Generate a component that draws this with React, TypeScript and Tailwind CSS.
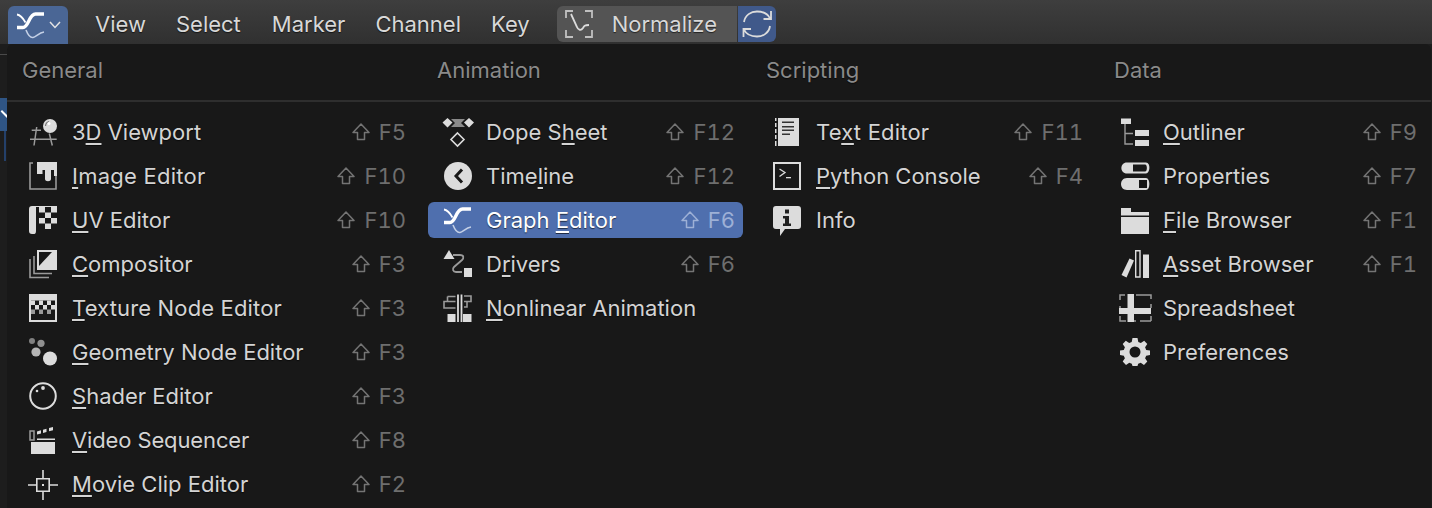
import type { ReactNode } from "react";

const G = "#dcdcdc";
const D = "#9a9a9a";
const BG = "#181818";

function Svg({ children, className = "w-[28px] h-[28px]" }: { children: ReactNode; className?: string }) {
  return (
    <svg viewBox="0 0 28 28" className={`${className} shrink-0 overflow-visible`} fill="none">
      {children}
    </svg>
  );
}

function GraphGlyph({ sub = "#dcdcdc" }: { sub?: string }) {
  return (
    <>
      <path d="M1 3.500C5 4 7 7 9.500 11.500" stroke="#fff" strokeWidth="1.800" />
      <path d="M1 16.500H7C12.500 16.500 13 3 19.500 3H28" stroke="#fff" strokeWidth="3.400" />
      <path d="M10 19C12 24 14 27 17 26.500C20 26 23 21.500 28 21" stroke={sub} strokeWidth="1.600" />
    </>
  );
}

const icons: Record<string, ReactNode> = {
  viewport: (
    <Svg>
      <path d="M7.700 9L5 27.500M20.300 15.500L23.300 27.500M2.700 12.300H12M1 21.300H27.700" stroke={D} strokeWidth="1.500" />
      <circle cx="21" cy="8" r="7" fill={G} />
      <path d="M16.500 8A5 5 0 0 1 20 3.500" stroke="#777" strokeWidth="1.200" />
      <circle cx="20" cy="5.500" r="1.500" fill="#fff" />
    </Svg>
  ),
  image: (
    <Svg>
      <path d="M4 1H1V27H27V14" stroke={D} strokeWidth="1.600" />
      <path d="M8 0H28V14H25V8H22V17C22 20 16 20 16 17V8H13.500V12H8Z" fill={G} />
    </Svg>
  ),
  uv: (
    <Svg>
      <path d="M3 0H28V1H7V25C7 27.500 6 28 4.500 28H3C1 28 0 27 0 25V3C0 1 1 0 3 0Z" fill={G} />
      <path d="M10 1H28V23H10Z" fill={G} />
      <path d="M16 1H22V6.500H16ZM10 6.500H16V12H10ZM22 6.500H28V12H22ZM16 12H22V17.500H16ZM10 17.500H16V23H10ZM22 17.500H28V23H22Z" fill={BG} />
    </Svg>
  ),
  compositor: (
    <Svg>
      <path d="M8 0H28V20H8Z" fill={G} />
      <path d="M10 2H23L10 16Z" fill={BG} />
      <path d="M5 6V23.500H23M1 9V27.500H20" stroke={D} strokeWidth="1.600" />
    </Svg>
  ),
  texture: (
    <Svg>
      <path d="M0 0H28V28H0Z" fill={G} />
      <path d="M2 6.500H26V26H2Z" fill={BG} />
      <path d="M2 6.500H6V11H2ZM10 6.500H14V11H10ZM18 6.500H22V11H18ZM6 11H10V15.500H6ZM14 11H18V15.500H14ZM22 11H26V15.500H22Z" fill={G} />
      <path d="M2 15.500H6V20H2ZM10 15.500H14V20H10ZM18 15.500H22V20H18Z" fill={D} />
    </Svg>
  ),
  geometry: (
    <Svg>
      <circle cx="3" cy="3" r="3" fill="#808080" />
      <circle cx="12" cy="5.300" r="3.600" fill="#8f8f8f" />
      <circle cx="7" cy="14" r="4.600" fill="#b5b5b5" />
      <circle cx="21" cy="20.500" r="7" fill={G} />
    </Svg>
  ),
  shader: (
    <Svg>
      <circle cx="14" cy="14" r="12.800" stroke={G} strokeWidth="2" />
      <circle cx="14" cy="6" r="1.900" fill={G} />
      <circle cx="8" cy="9" r="1.300" fill={G} />
    </Svg>
  ),
  video: (
    <Svg>
      <path d="M2 16H26V28H2Z" fill={G} />
      <path d="M8 12.500H26V14H8Z" fill={G} />
      <path d="M1 5H5V14H1Z" stroke={D} strokeWidth="1.500" />
      <path d="M8 5.500L12 4.300V7.500L8 8.500ZM14 3.700L17.500 2.700V6L14 7ZM20 2L24 1V4.300L20 5.300Z" fill={G} />
    </Svg>
  ),
  clip: (
    <Svg>
      <path d="M14 0V8M14 21V30M-1 15H7M20 15H29" stroke={G} strokeWidth="1.600" />
      <path d="M7.800 8.800H20.200V21.200H7.800Z" stroke={G} strokeWidth="1.600" />
      <path d="M13 14H15V16H13Z" fill={G} />
    </Svg>
  ),
  dope: (
    <Svg>
      <path d="M8 1H22L18 5L22 9H8L12 5Z" fill="#8a8a8a" />
      <path d="M4.500 0L9.500 4.500L4.500 9.500L-0.500 4.500ZM26 0L31 4.500L26 9.500L21 4.500Z" fill={G} />
      <path d="M14.500 15L21 21.500L14.500 28L8 21.500Z" stroke={G} strokeWidth="1.600" />
    </Svg>
  ),
  timeline: (
    <Svg>
      <circle cx="15" cy="14" r="14" fill={G} />
      <path d="M19 7.500L13 14L19 20.500" stroke={BG} strokeWidth="3" />
    </Svg>
  ),
  graph: (
    <Svg>
      <GraphGlyph sub="#c4d0e6" />
    </Svg>
  ),
  drivers: (
    <Svg>
      <path d="M6 0L11.500 9H0.500Z" fill={G} />
      <path d="M21 18H29V27H21Z" fill={G} />
      <path d="M10 5H17C21 5 21 8 19 10L11 17C9 19 10 22 13 22H19" stroke={D} strokeWidth="1.800" />
    </Svg>
  ),
  nla: (
    <Svg>
      <path d="M15 0.500V28M18.500 0.500V28" stroke={G} strokeWidth="1.800" />
      <path d="M4.500 2.500H12.500M4.500 2.500V7.500H1V14H12.500M4.500 7.500H12.500M21 2H28V7.500H21M24 7.500V13H21" stroke={D} strokeWidth="1.600" />
      <path d="M4.500 20H12.500V28H4.500ZM20 20H28.500V28H20Z" fill={G} />
    </Svg>
  ),
  text: (
    <Svg>
      <path d="M2 0H3.500V3H2ZM2 5H3.500V9H2ZM2 11H3.500V15H2ZM2 17H3.500V21H2ZM2 23H3.500V28H2Z" fill={G} />
      <path d="M5 0H26V28H5Z" fill={G} />
      <path d="M9 3.500H21V5H9ZM9 8H21V9.500H9ZM9 11.500H21V13H9ZM9 15.500H17V17H9Z" fill="#333" />
    </Svg>
  ),
  python: (
    <Svg>
      <path d="M1 1H27V27H1Z" stroke={G} strokeWidth="2" />
      <path d="M6.500 7L12 10.500L6.500 14.500" stroke={G} strokeWidth="1.300" />
      <path d="M13 15H18V16.300H13Z" fill={G} />
    </Svg>
  ),
  info: (
    <Svg>
      <path d="M3 0H25C27 0 28 1 28 3V20C28 22 27 23 25 23H12L7 30V23H3C1 23 0 22 0 20V3C0 1 1 0 3 0Z" fill={G} />
      <path d="M12 3.500H16V7.500H12ZM10 10H16V17.500H18V20H10V17.500H12V12.500H10Z" fill="#202020" />
    </Svg>
  ),
  outliner: (
    <Svg>
      <path d="M1 0.500H11V6H1Z" fill={G} />
      <path d="M5 6V26H13M5 15.500H13" stroke={D} strokeWidth="1.400" />
      <path d="M15 12H29V18H15ZM15 22H29V28H15Z" fill={G} />
    </Svg>
  ),
  properties: (
    <Svg>
      <path d="M7 0.500H26C31 0.500 30 11.500 26 11.500H7C-0.500 11.500 -0.500 0.500 7 0.500Z" fill={G} />
      <path d="M13 2.500H25C27.500 2.500 27.500 9.500 25 9.500H13Z" fill={BG} />
      <path d="M7 16H26C30.500 16 30.500 28 26 28H7C-1 28 -1 16 7 16Z" fill={G} />
      <path d="M19 18H27V26H19Z" fill={BG} />
    </Svg>
  ),
  files: (
    <Svg>
      <path d="M1 2H11V6H29V9.500H1Z" fill={G} />
      <path d="M1 11H29V28H1Z" fill={G} />
    </Svg>
  ),
  asset: (
    <Svg>
      <path d="M1.500 25L9.500 8.500L14 10.500L6.500 27.500Z" fill={G} />
      <path d="M15.700 0.700H20V27H15.700Z" stroke={G} strokeWidth="1.400" />
      <path d="M23 4.500H29V28H23Z" fill={G} />
    </Svg>
  ),
  sheet: (
    <Svg>
      <path d="M5 1H0V6M0 12V15M0 22V27H6M16 1H24M24 1H31V5M31 14V10M31 27H25V27M31 22V27M10 27H16M20 27H25" stroke={D} strokeWidth="1.500" />
      <path d="M7.500 0H14V14H31V20H14V28H7.500V20H-1V14H7.500Z" fill={G} />
    </Svg>
  ),
  prefs: (
    <Svg>
      <path
        fillRule="evenodd"
        d="M12.500 0H17.500L18.300 3.900L20.800 4.900L24.200 2.700L27.300 6L25.100 9.300L26.200 11.900L30 12.600V15.400L30 17L26.200 17.700L25.100 20.300L27.300 23.600L24 27L20.700 24.700L18.200 25.700L17.500 28H12.500L11.800 25.700L9.300 24.700L6 27L2.700 23.600L4.900 20.300L3.800 17.700L0 17V12.600L3.800 11.900L4.900 9.300L2.700 6L5.800 2.700L9.200 4.900L11.700 3.900ZM15 8.500A5.500 5.500 0 1 0 15 19.500A5.500 5.500 0 1 0 15 8.500Z"
        fill={G}
      />
    </Svg>
  ),
};

type Item = { icon: string; label: string; hot?: string; key_?: string; active?: boolean; track?: string };

const columns: { title: string; width: string; titlePad: string; rowPad: string; items: Item[] }[] = [
  {
    title: "General",
    width: "w-[401px]",
    titlePad: "pl-[8px]",
    rowPad: "pr-[9px]",
    items: [
      { icon: "viewport", label: "3D Viewport", hot: "D", key_: "F5" },
      { icon: "image", label: "Image Editor", hot: "I", key_: "F10", track: "tracking-[0.25px]" },
      { icon: "uv", label: "UV Editor", hot: "U", key_: "F10" },
      { icon: "compositor", label: "Compositor", hot: "C", key_: "F3" },
      { icon: "texture", label: "Texture Node Editor", hot: "T", key_: "F3", track: "tracking-[0.15px]" },
      { icon: "geometry", label: "Geometry Node Editor", hot: "G", key_: "F3" },
      { icon: "shader", label: "Shader Editor", hot: "S", key_: "F3" },
      { icon: "video", label: "Video Sequencer", hot: "V", key_: "F8", track: "tracking-[-0.13px]" },
      { icon: "clip", label: "Movie Clip Editor", hot: "M", key_: "F2" },
    ],
  },
  {
    title: "Animation",
    width: "w-[317px] pr-[2px]",
    titlePad: "pl-[9px]",
    rowPad: "pr-[8px]",
    items: [
      { icon: "dope", label: "Dope Sheet", hot: "h", key_: "F12" },
      { icon: "timeline", label: "Timeline", hot: "l", key_: "F12" },
      { icon: "graph", label: "Graph Editor", hot: "E", key_: "F6", active: true },
      { icon: "drivers", label: "Drivers", hot: "r", key_: "F6" },
      { icon: "nla", label: "Nonlinear Animation", hot: "N" },
    ],
  },
  {
    title: "Scripting",
    width: "w-[334px]",
    titlePad: "pl-[8px]",
    rowPad: "pr-[9px]",
    items: [
      { icon: "text", label: "Text Editor", hot: "x", key_: "F11", track: "tracking-[0.2px]" },
      { icon: "python", label: "Python Console", hot: "P", key_: "F4" },
      { icon: "info", label: "Info" },
    ],
  },
  {
    title: "Data",
    width: "w-[321px]",
    titlePad: "pl-[9px]",
    rowPad: "pr-[9px]",
    items: [
      { icon: "outliner", label: "Outliner", hot: "O", key_: "F9" },
      { icon: "properties", label: "Properties", key_: "F7" },
      { icon: "files", label: "File Browser", hot: "F", key_: "F1" },
      { icon: "asset", label: "Asset Browser", hot: "A", key_: "F1" },
      { icon: "sheet", label: "Spreadsheet" },
      { icon: "prefs", label: "Preferences" },
    ],
  },
];

function Label({ text, hot }: { text: string; hot?: string }) {
  if (!hot) return <span>{text}</span>;
  const i = text.indexOf(hot);
  return (
    <span>
      {text.slice(0, i)}
      <span className="underline decoration-[2px] underline-offset-[3px] [text-decoration-skip-ink:none]">{hot}</span>
      {text.slice(i + 1)}
    </span>
  );
}

function ShiftArrow({ color }: { color: string }) {
  return (
    <svg viewBox="0 0 18 18" className="w-[18px] h-[18px]" fill="none">
      <path d="M9 1L17 9.500H12.500V16.500H5.500V9.500H1Z" stroke={color} strokeWidth="1.500" strokeLinejoin="round" />
    </svg>
  );
}

function Row({ item, pad }: { item: Item; pad: string }) {
  return (
    <div
      className={`h-[36px] w-full pl-[15px] ${pad} flex items-center rounded-[6px] ${
        item.active ? "bg-[#4f6fae] text-white" : "text-[#d4d4d4]"
      }`}
    >
      {icons[item.icon]}
      <span className={`ml-[15px] flex-1 [text-shadow:0_1px_1px_rgba(0,0,0,0.6)] ${item.track ?? ""}`}>
        <Label text={item.label} hot={item.hot} />
      </span>
      {item.key_ && (
        <span className={`flex items-center gap-[9px] tabular-nums ${item.active ? "text-[#9db0d6]" : "text-[#6e6e6e]"}`}>
          <ShiftArrow color={item.active ? "#9db0d6" : "#747474"} />
          {item.key_}
        </span>
      )}
    </div>
  );
}

export default function App() {
  return (
    <div className="w-[1432px] h-[508px] overflow-hidden bg-[#1d1d1d] flex flex-col font-['Inter',sans-serif] text-[22px] leading-none">
      {/* Top bar */}
      <div className="h-[44px] shrink-0 bg-gradient-to-b from-[#3e3e3e] to-[#303030] flex items-end pl-[8px] text-[#d8d8d8] [text-shadow:0_1px_1px_rgba(0,0,0,0.6)]">
        <div className="w-[60px] h-[38px] bg-[#4a6695] rounded-t-[6px] flex items-center pl-[8px]">
          <Svg>
            <GraphGlyph sub="#c4d0e6" />
          </Svg>
          <svg viewBox="0 0 12 8" className="w-[12px] h-[8px] ml-[5px]" fill="none">
            <path d="M1 1L6 6.500L11 1" stroke="#e4e4e4" strokeWidth="1.500" />
          </svg>
        </div>
        <div className="flex items-center h-[38px] pb-[2px] ml-[27px]">
          <span>View</span>
          <span className="ml-[30px]">Select</span>
          <span className="ml-[31px]">Marker</span>
          <span className="ml-[30px]">Channel</span>
          <span className="ml-[30px]">Key</span>
        </div>
        <div className="flex items-stretch h-[36px] mb-[2px] ml-[27px]">
          <div className="w-[180px] bg-[#545454] rounded-l-[6px] flex items-center pl-[8px] gap-[19px]">
            <Svg>
              <path d="M8 1H1V8M20 1H27V8M1 20V27H8M27 20V27H20" stroke="#c0c0c0" strokeWidth="1.800" />
              <path d="M6 4L12 17C13 20 16 21 18 18C19 16 19.500 15 24 15" stroke={G} strokeWidth="1.800" />
            </Svg>
            <span>Normalize</span>
          </div>
          <div className="w-[38px] ml-[1px] bg-[#40598a] rounded-r-[6px] flex items-center justify-center">
            <Svg>
              <path d="M1 12C2 5 8 1.500 14 1.500C20 1.500 25 4 27 8.500M28 1V9H20.500" stroke={G} strokeWidth="1.800" />
              <path d="M27 16C26 23 20 26.500 14 26.500C8 26.500 3 24 1 19.500M0.500 27V19H8" stroke={G} strokeWidth="1.800" />
            </Svg>
          </div>
        </div>
      </div>

      <div className="flex flex-1 min-h-0">
        {/* Editor peeking out behind the menu */}
        <div className="w-[7px] shrink-0 flex flex-col">
          <div className="h-[10px] shrink-0" />
          <div className="h-px bg-[#4a4a4a] shrink-0" />
          <div className="h-[43px] shrink-0" />
          <div className="h-[33px] bg-[#2f5585] shrink-0 relative overflow-hidden">
            <div className="absolute left-0 top-[15px] w-[9px] h-[2px] bg-white rotate-45" />
          </div>
          <div className="h-[30px] w-[2px] ml-[4px] bg-[#24406a] shrink-0" />
        </div>

        {/* Area menu */}
        <div className="w-[1424px] bg-[#181818] rounded-t-[6px]">
          <div className="flex h-[58px] pb-[5px] border-b-2 border-[#2e2e2e] pl-[7px] gap-[13px] items-center text-[#8a8a8a]">
            {columns.map((col) => (
              <div key={col.title} className={`${col.width} ${col.titlePad} [text-shadow:0_1px_1px_rgba(0,0,0,0.6)]`}>
                {col.title}
              </div>
            ))}
          </div>
          <div className="flex pl-[7px] gap-[13px] pt-[12px]">
            {columns.map((col) => (
              <div key={col.title} className={`${col.width} flex flex-col gap-[8px]`}>
                {col.items.map((item) => (
                  <Row key={item.label} item={item} pad={col.rowPad} />
                ))}
              </div>
            ))}
          </div>
        </div>
      </div>
    </div>
  );
}
